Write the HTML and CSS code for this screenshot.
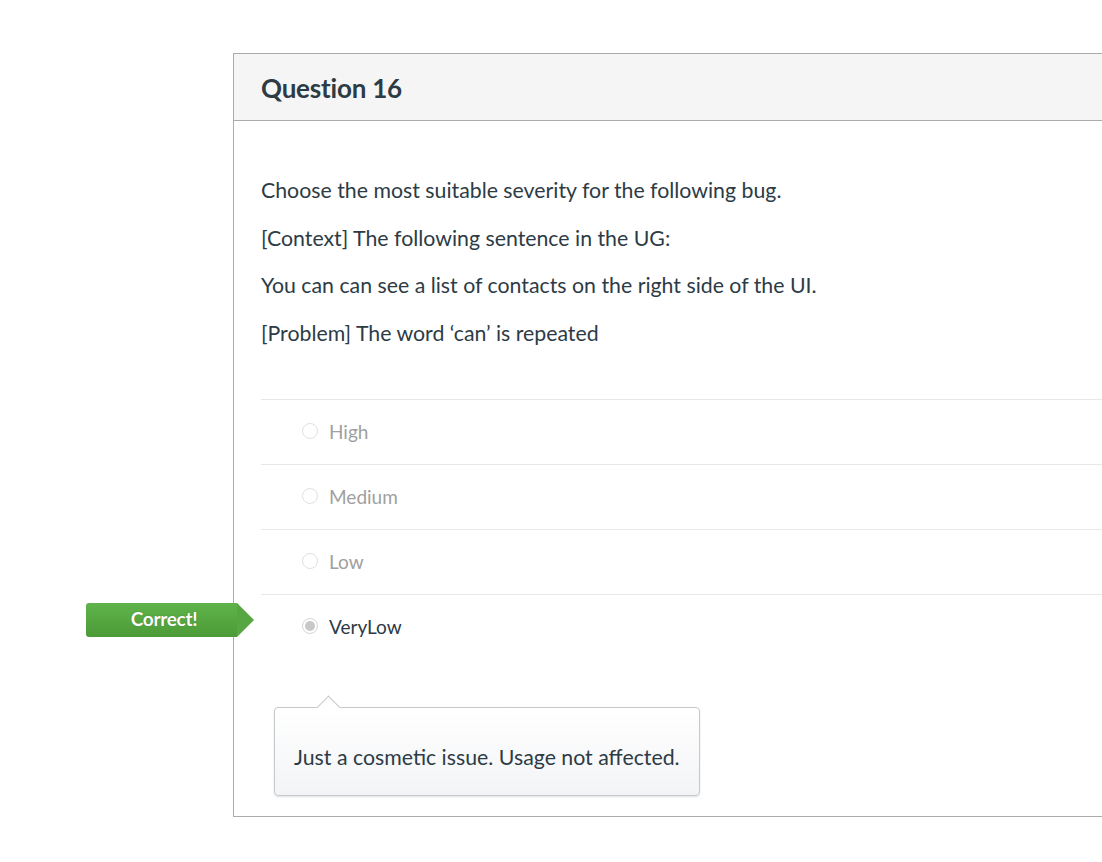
FILE: index.html
```html
<!DOCTYPE html>
<html>
<head>
<meta charset="utf-8">
<link rel="stylesheet" href="styles.css">
</head>
<body>
<div class="card">
  <div class="card-header">
    <h2 class="title">Question 16</h2>
  </div>
  <div class="card-body">
    <div class="question-text">
      <p>Choose the most suitable severity for the following bug.</p>
      <p>[Context] The following sentence in the UG:</p>
      <p>You can can see a list of contacts on the right side of the UI.</p>
      <p>[Problem] The word ‘can’ is repeated</p>
    </div>
    <div class="answers">
      <div class="answer"><span class="radio"></span><span class="label">High</span></div>
      <div class="answer"><span class="radio"></span><span class="label">Medium</span></div>
      <div class="answer"><span class="radio"></span><span class="label">Low</span></div>
      <div class="answer selected">
        <div class="badge">Correct!</div>
        <span class="radio checked"></span><span class="label">VeryLow</span>
      </div>
    </div>
    <div class="comment">
      <span class="comment-arrow"></span>
      <p>Just a cosmetic issue. Usage not affected.</p>
    </div>
  </div>
</div>
</body>
</html>
```
FILE: styles.css
```css
html, body {
  margin: 0;
  padding: 0;
  background: #fff;
  overflow: hidden;
}
body {
  font-family: Lato, "Open Sans", sans-serif;
  color: #2d3b45;
  padding-top: 53px;
  padding-left: 233px;
}
.card {
  width: 869px;
  border: 1px solid #ababab;
  border-right: none;
  box-sizing: border-box;
}
.card-header {
  height: 67px;
  background: #f5f5f5;
  border-bottom: 1px solid #ababab;
  display: flex;
  align-items: center;
  padding-left: 27px;
  padding-top: 1px;
  box-sizing: border-box;
}
.title {
  margin: 0;
  font-size: 26px;
  font-weight: 700;
  color: #2d3b45;
  letter-spacing: -0.2px;
}
.card-body {
  padding: 55px 0 20px 27px;
  position: relative;
}
.question-text p {
  margin: 0 0 19.7px;
  font-size: 21.3px;
  line-height: 28px;
}
.question-text {
  padding-bottom: 32px;
}
.answers {
  display: flex;
  flex-direction: column;
}
.answer {
  height: 64px;
  border-top: 1px solid #e8e8e8;
  display: flex;
  align-items: center;
  padding-left: 41px;
  position: relative;
}
.radio {
  width: 16px;
  height: 16px;
  border-radius: 50%;
  border: 1px solid #e0e0e0;
  background: #fff;
  box-sizing: border-box;
  margin-right: 11px;
  position: relative;
  margin-top: -2px;
}
.radio.checked {
  border-color: #d6d6d6;
}
.radio.checked::after {
  content: "";
  position: absolute;
  left: 2px;
  top: 2px;
  width: 10px;
  height: 10px;
  border-radius: 50%;
  background: #c8c8c8;
}
.label {
  font-size: 19px;
  color: #a0a0a0;
}
.selected .label {
  color: #2d3b45;
}
.badge {
  position: absolute;
  left: -175px;
  top: 8px;
  width: 151px;
  height: 34px;
  line-height: 32px;
  padding-left: 5px;
  background: linear-gradient(#60b34a, #4b9b38);
  color: #fff;
  font-weight: 700;
  font-size: 19px;
  text-align: center;
  border-radius: 3px 0 0 3px;
  box-sizing: border-box;
  text-shadow: 0 0 1px rgba(0,0,0,0.35);
  letter-spacing: -0.3px;
}
.badge::after {
  content: "";
  position: absolute;
  right: -17px;
  top: 0;
  border-top: 17px solid transparent;
  border-bottom: 17px solid transparent;
  border-left: 17px solid #56a741;
}
.comment {
  position: relative;
  margin-top: 48px;
  margin-left: 13px;
  width: 426px;
  height: 89px;
  box-sizing: border-box;
  border: 1px solid #c5c8cc;
  border-radius: 4px;
  background: linear-gradient(#fff, #f3f4f6);
  box-shadow: 0 1px 2px rgba(0,0,0,0.12);
  display: flex;
  align-items: center;
  padding-left: 19px;
  padding-top: 12px;
}
.comment p {
  margin: 0;
  font-size: 21.3px;
  color: #2d3b45;
}
.comment-arrow {
  position: absolute;
  left: 45px;
  top: -9px;
  width: 16px;
  height: 16px;
  background: #fff;
  border-top: 1px solid #c5c8cc;
  border-left: 1px solid #c5c8cc;
  transform: rotate(45deg);
}
```
